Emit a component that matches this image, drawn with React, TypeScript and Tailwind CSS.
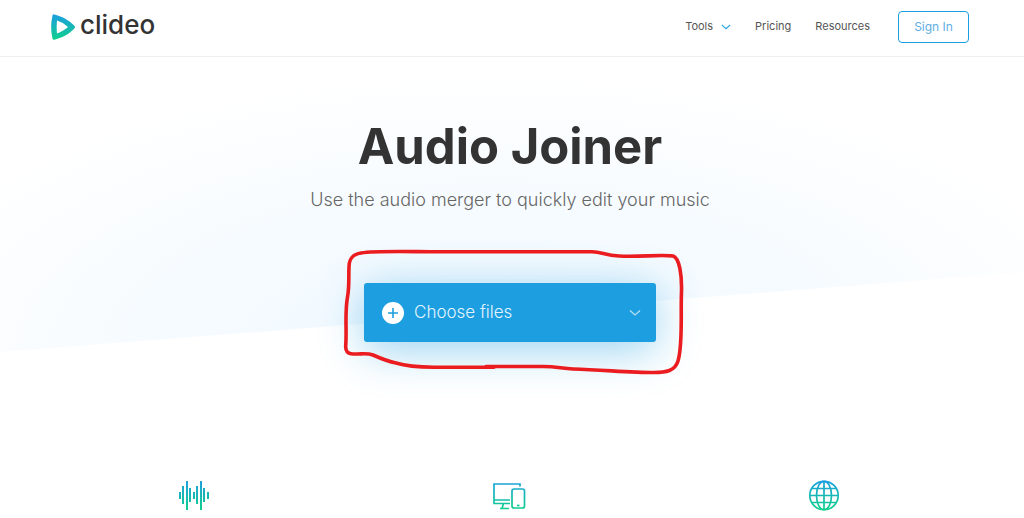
import React from "react";

const navLinks = ["Pricing", "Resources"];

const Logo = () => (
  <a href="#" className="flex items-center gap-1 text-[#333333]" aria-label="clideo">
    <svg width="25" height="26" viewBox="0 0 25 26" aria-hidden="true">
      <defs>
        <linearGradient id="logoFill" x1="0" y1="0" x2="0" y2="1">
          <stop offset="0" stopColor="#1c9ee0" />
          <stop offset="1" stopColor="#10d08c" />
        </linearGradient>
      </defs>
      <path
        fill="url(#logoFill)"
        fillRule="evenodd"
        d="M3.2 .4C10.5 2 18 6 23.4 11.7C24.2 12.6 24.2 13.6 23.4 14.5C18 20.2 10.5 24.2 3.2 25.7C2.3 25.9 1.7 25.5 1.5 24.7C-.3 17-.3 9 1.5 1.4C1.7 .6 2.3 .2 3.2 .4ZM6 6.6C5.600 10.800 5.600 15.300 6 19.500C10 18.200 13.700 16 17 13.050C13.700 10.100 10 7.900 6 6.600Z"
      />
    </svg>
    <span className="mb-1 text-[26px] leading-8 font-medium">clideo</span>
  </a>
);

const Chevron = ({ className }: { className: string }) => (
  <svg
    className={className}
    viewBox="0 0 12 8"
    fill="none"
    stroke="currentColor"
    strokeWidth="1.3"
    aria-hidden="true"
  >
    <path d="M1 1.5L6 6L11 1.5" />
  </svg>
);

const Header = () => (
  <header className="border-b border-[#eeeeee] bg-white">
    <div className="flex h-14 items-center justify-between pr-[55px] pb-[3px] pl-[51px]">
      <Logo />
      <nav className="flex items-center text-[11px] text-[#555555]">
        <button type="button" className="mr-6 flex items-center gap-2">
          Tools
          <Chevron className="h-2 w-[10px] text-[#1c9ee0]" />
        </button>
        {navLinks.map((link) => (
          <a key={link} href="#" className="mr-6 last-of-type:mr-7">
            {link}
          </a>
        ))}
        <button
          type="button"
          className="h-8 w-[71px] rounded-[4px] border border-[#1c9ee0] text-[12px] text-[#5eaee6]"
        >
          Sign In
        </button>
      </nav>
    </div>
  </header>
);

const ChooseFiles = () => (
  <div className="relative mx-auto mt-[71px] w-[292px]">
    <button
      type="button"
      className="flex h-[59px] w-full items-center rounded-[3px] bg-[#1c9ee0] px-[18px] text-white shadow-[0_8px_44px_rgba(28,158,224,0.45)]"
    >
      <svg width="22" height="22" viewBox="0 0 22 22" aria-hidden="true">
        <circle cx="11" cy="11" r="11" fill="#fff" />
        <path d="M11 6V16M6 11H16" stroke="#1c9ee0" strokeWidth="1.6" />
      </svg>
      <span className="ml-[10px] text-[17px] font-light text-[#e2f4ff]">Choose files</span>
      <Chevron className="mr-[-3px] ml-auto h-2 w-3 text-[#b5def5]" />
    </button>
    {/* hand drawn marker around the button */}
    <svg
      className="pointer-events-none absolute top-[-34px] left-[-22px] h-[126px] w-[344px]"
      viewBox="342 249 344 126"
      fill="none"
      stroke="#ea1c1f"
      strokeWidth="3.6"
      strokeLinecap="round"
      strokeLinejoin="round"
      aria-hidden="true"
    >
      <path d="M486 366.5H540C555 366 561 368.5 573 369C605 370 630 372.5 654 372.5C666 372.5 675 371 678 361C683 345 680.5 313 681.5 292C682 275 679.5 258 673 256C660 254.5 640 257 619 256C605 255.5 602 252 592 251.8H430C400 251.5 375 250.8 361 253C352 254.5 349 259 349 267C348.5 276 349.5 287 347.5 297C344.5 314 347 330 345.7 346C345.5 351 347.5 354 353 354C361 354.5 366 352.5 373 355C382 359 388 361.5 396 363C407 366.5 419 367.2 434 367.2H494" />
    </svg>
  </div>
);

const Hero = () => (
  <section className="relative isolate h-[413px] text-center">
    {/* slanted backdrop */}
    <div className="absolute inset-x-0 top-0 -z-10 h-[295px] bg-[radial-gradient(ellipse_62%_95%_at_48%_100%,#eff8fe_0%,#f6fbff_55%,#ffffff_100%)] [clip-path:polygon(0_0,100%_0,100%_73%,0_100%)]" />
    <div className="pt-[60px] pr-1">
      <h1 className="text-[49px] leading-[60px] font-bold text-[#333333]">Audio Joiner</h1>
      <p className="mt-[11px] text-[18px] leading-6 font-light text-[#666666]">
        Use the audio merger to quickly edit your music
      </p>
      <ChooseFiles />
    </div>
  </section>
);

// x, top, bottom
const bars = [
  [1, 12, 19],
  [4, 6, 24],
  [8, 1, 30],
  [11, 8, 22],
  [15, 12, 19],
  [18, 6, 24],
  [22, 1, 30],
  [25, 8, 22],
  [29, 12, 19],
];

const features = [
  {
    label: "Audio formats",
    drawing: bars.map(([x, y1, y2]) => (
      <path key={x} d={`M${x} ${y1}V${y2}`} strokeWidth="2" />
    )),
  },
  {
    label: "Any device",
    drawing: (
      <>
        <path d="M26 6.5V4H0V23.5H16M0 20H16M9.5 23.5L8 28.5M6 28.5H15" />
        <rect x="18" y="9" width="12.5" height="19" rx="2" />
        <path d="M23 25.5H25.5" />
      </>
    ),
  },
  {
    label: "Online",
    drawing: (
      <>
        <circle cx="15" cy="15.5" r="14.2" />
        <ellipse cx="15" cy="15.5" rx="7.5" ry="14.2" />
        <path d="M15 1.5V29.5M1 15.5H29M3 8.5H27M3 22.5H27" />
      </>
    ),
  },
];

const Features = () => (
  <section className="grid grid-cols-3 pt-[10px] pr-[43px] pb-2 pl-[37px]">
    {features.map((feature) => (
      <div key={feature.label} className="flex justify-center">
        <svg
          role="img"
          aria-label={feature.label}
          className="h-[30px] w-8 overflow-visible"
          viewBox="-1 0 32 30"
          fill="none"
          stroke="url(#iconStroke)"
          strokeWidth="1.7"
        >
          <defs>
            <linearGradient
              id="iconStroke"
              gradientUnits="userSpaceOnUse"
              x1="0"
              y1="0"
              x2="0"
              y2="30"
            >
              <stop offset="0" stopColor="#1c9ee0" />
              <stop offset="1" stopColor="#10d08c" />
            </linearGradient>
          </defs>
          {feature.drawing}
        </svg>
      </div>
    ))}
  </section>
);

const App = () => {
  return (
    <div className="bg-white font-['Inter','Liberation_Sans',sans-serif]">
      <Header />
      <Hero />
      <Features />
    </div>
  );
};

export default App;
